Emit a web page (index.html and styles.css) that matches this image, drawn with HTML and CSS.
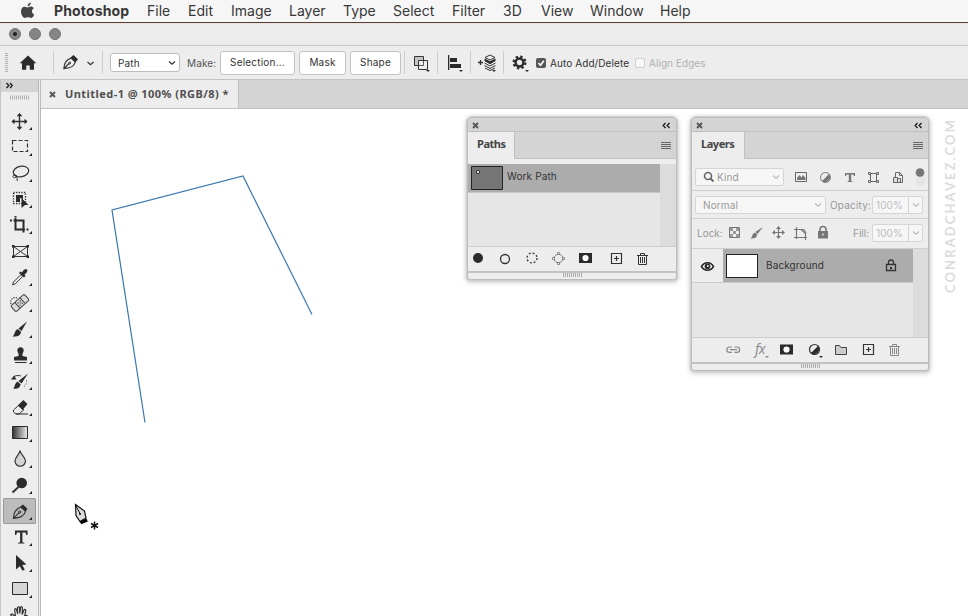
FILE: index.html
```html
<!DOCTYPE html>
<html lang="en">
<head>
<meta charset="utf-8">
<title>Photoshop</title>
<link rel="stylesheet" href="styles.css">
</head>
<body>
<nav class="menubar">
  <svg class="apple" width="54" height="22" viewBox="0 0 54 22"><path d="M27.600 6.300c0-1.900 1.300-3.400 3.100-3.700.2 1.900-1.300 3.700-3.100 3.700zM24.300 6.700c1.300 0 2 .7 3.100.7s1.900-.8 3.400-.8c1.200 0 2.300.6 3 1.600-2.700 1.600-2.200 5.100.4 6.200-.6 1.600-1.900 3.600-3.200 3.600-1.200 0-1.600-.7-3.100-.7s-2 .7-3.100.7c-1.600 0-3.800-3.500-3.800-6.500 0-3 1.700-4.800 3.300-4.800z"/></svg>
  <b>Photoshop</b><span>File</span><span>Edit</span><span>Image</span><span>Layer</span><span>Type</span><span>Select</span><span>Filter</span><span>3D</span><span>View</span><span>Window</span><span>Help</span>
</nav>
<header class="titlebar"><i class="light edited"></i><i class="light"></i><i class="light"></i></header>
<section class="options">
  <svg class="lead" width="110" height="33" viewBox="0 0 110 33">
    <path class="grip" d="M6.500 7v20" stroke-width="3" stroke-dasharray="1 1"/>
    <path class="ink" d="M28 9.500l8.300 7.700h-2.300v6.600h-4.300v-4.300h-3.400v4.300h-4.300v-6.600h-2.300z"/>
    <path class="sep" d="M53.500 5v23M102.500 5v23"/>
    <g transform="translate(63 9)"><path d="M.8 13.700C1 8.500 3 4.600 8.300 3.200l4 4C11 11.800 6.500 13.500.8 13.700zM1 13.500l5-5" class="line" stroke-width="1.200"/><circle cx="6.700" cy="8" r="1" class="line"/><path class="ink" d="M7.500 2.500L10.500 0l4.500 4.300-2.500 3z"/></g>
    <path class="line" stroke-width="1.200" d="M87.500 16l3 2.800 3-2.800"/>
  </svg>
  <div class="select path"><span>Path</span><svg width="8" height="6" viewBox="0 0 8 6"><path class="line" stroke-width="1.200" d="M1 1.500l3 2.800 3-2.800"/></svg></div>
  <span class="make">Make:</span>
  <button class="b1">Selection...</button><button class="b2">Mask</button><button class="b3">Shape</button>
  <svg class="ops" width="134" height="33" viewBox="401 0 134 33">
    <path class="sep" d="M404.500 5v23M437.500 5v23M470.500 5v23M503.500 5v23"/>
    <path d="M414.500 10.500h9v9h-9z" fill="#c6c6c6" stroke="#333"/><path d="M418.500 14.500h9v9h-9z" fill="#eee" stroke="#333"/><path class="line" d="M418.500 19.500h5v-5" stroke-width=".8"/>
    <path class="ink" d="M448 9h1.300v15H448zM450 12h7v4h-7zM450 18h11v4h-11zM426 24h4l-2 2zM459 24h4l-2 2zM492 24h4l-2 2zM525 24h4l-2 2z"/>
    <path class="line" stroke-width="1.300" d="M478 16.500h5M480.500 14v5"/>
    <path class="line" d="M490 9l5 2.500-5 2.500-5-2.500z"/><path class="ink" d="M484.500 12.500l5.500 2.700 5.500-2.700v2.500l-5.500 3.200-5.500-3.200z"/><path class="line" d="M484.500 17l5.500 3 5.500-3M484.500 19.500l5.500 3 5.500-3M485 22l5 2.500 5-2.500"/>
    <circle cx="519.500" cy="16.500" r="3.900" fill="none" stroke="#2b2b2b" stroke-width="2.500"/><circle cx="519.500" cy="16.500" r="5.900" fill="none" stroke="#2b2b2b" stroke-width="2.200" stroke-dasharray="2.400 2.234"/>
  </svg>
  <i class="check on"><svg width="10" height="10" viewBox="0 0 10 10"><path d="M2.500 5l2 2.200 3.300-4.500" fill="none" stroke="#fff" stroke-width="1.600"/></svg></i>
  <span class="auto">Auto Add/Delete</span><i class="check"></i><span class="align">Align Edges</span>
</section>
<main class="workspace">
  <aside class="tools">
    <div class="collapse"><svg width="38" height="12" viewBox="0 0 38 12"><path d="M6.500 3l2.300 2.500L6.500 8M10 3l2.300 2.500L10 8" fill="none" stroke="#222" stroke-width="1.400"/></svg></div>
    <svg class="toolgrip" width="38" height="16" viewBox="0 0 38 16"><path class="grip" d="M10 5.500h20" stroke-width="4" stroke-dasharray="1 1"/></svg>
    <div class="tool more"><svg viewBox="0 0 38 26"><path class="line" stroke-width="1.400" d="M12 13.500h15M19.500 6v15"/><path class="ink" d="M19.500 5l2.800 3.300h-5.600zM19.500 22l2.800-3.300h-5.600zM11.500 13.500l3-2.800v5.600zM27.500 13.500l-3-2.800v5.600z"/></svg></div>
    <div class="tool more"><svg viewBox="0 0 38 26"><path class="line" stroke-width="1.200" stroke-dasharray="4 2" d="M12.500 6.500h15v11h-15z"/></svg></div>
    <div class="tool more"><svg viewBox="0 0 38 26"><ellipse class="line" stroke-width="1.200" cx="21" cy="11.500" rx="7.800" ry="5.300" transform="rotate(-12 21 11.500)"/><path class="line" d="M14 15c-2 1-1 3.500 1.500 2.500s1-3-1.500-2.500c2 1 4 3 3 6"/></svg></div>
    <div class="tool more"><svg viewBox="0 0 38 26"><path class="line" stroke-width="1.300" stroke-dasharray="1.300 1.300" d="M13.500 6.500h12v11h-12z"/><path class="ink" d="M16 9h7v4l-3-1v4h-4zM21.500 12l7 7h-3.500l-3.500 3z"/></svg></div>
    <div class="tool more"><svg viewBox="0 0 38 26"><path d="M13.500 8.500h10v12M15.500 6v11.500h9.500" fill="none" stroke="#2b2b2b" stroke-width="2"/><path class="ink" d="M10 7.500h2v2h-2zM14.500 4h2v1.500h-2zM26.500 16.500h2v2h-2z"/></svg></div>
    <div class="tool"><svg viewBox="0 0 38 26"><path class="line" fill="#ddd" d="M13.500 8.500h14v10h-14zM13.500 8.500l14 10M27.500 8.500l-14 10"/><path class="ink" d="M12 7h2.500v2.500H12zM26.500 7H29v2.500h-2.500zM12 17.500h2.500V20H12zM26.500 17.500H29V20h-2.500z"/></svg></div>
    <div class="tool more"><svg viewBox="0 0 38 26"><path class="line" fill="#fff" d="M21 10.500l-7.500 7.500-1 2.800 2.800-1 7.500-7.500z"/><path class="ink" d="M19 9l1.500-1.500L22 8.500C23.500 5.500 26 4 27 5.500s0 3.500-2.500 5l1 1.500-1.500 1.500z"/></svg></div>
    <div class="tool more"><svg viewBox="0 0 38 26"><path class="line" stroke-width="1.200" stroke-dasharray="1.200 1.200" d="M11 14c-1.500-5 3-8 7-5.500"/><g transform="rotate(-42 20 13)"><rect x="11" y="9" width="18" height="8" rx="1.500" fill="#ddd" stroke="#444"/><path d="M16.500 9v7.500M23.500 9v7.500" stroke="#444"/><path d="M18 11h1.200v1.200H18zM21 11h1.200v1.200H21zM18 14h1.200v1.200H18zM21 14h1.200v1.200H21zM19.500 12.500h1.200v1.200h-1.200z" fill="#333"/></g></svg></div>
    <div class="tool more"><svg viewBox="0 0 38 26"><path class="ink" d="M27 5.500l-5.500 9.500-3-2.500zM17.800 13l3.200 2.700c-.5 4-3.500 5.300-8.500 4.800 2.500-1.500 1.500-5.500 5.300-7.500z"/></svg></div>
    <div class="tool more"><svg viewBox="0 0 38 26"><path class="ink" d="M17.500 9.500a3.200 3.200 0 1 1 6 0c-.5 1.500-1.500 2-1 4.500l4.500 1v3.500H14V15l4.500-1c.5-2.500-.5-3-1-4.500zM15 20h11.500v1H15z"/></svg></div>
    <div class="tool more"><svg viewBox="0 0 38 26"><path class="ink" d="M28 5.500l-6.500 10-3-2.500zM17.500 13.500l3.200 2.700c-1 3.800-3 5-7.500 4.300 2-1.500.8-4.500 4.300-7zM11 11.500l3-4 2.500 4z"/><path class="line" d="M14 8.500c3-1.500 5-1 7-.5"/><path class="line" stroke-dasharray="1 2" d="M26.500 12.500c.5 3-1 6-4.500 7"/></svg></div>
    <div class="tool more"><svg viewBox="0 0 38 26"><path class="line" fill="#fff" d="M19 11l-5.500 5v2l2.500 2h3l5-4.500z"/><path class="ink" d="M23.300 6l4.200 4-5 6-4.700-4.500zM16 19.500h12v1H16z"/></svg></div>
    <div class="tool more"><svg viewBox="0 0 38 26"><defs><linearGradient id="ramp"><stop stop-color="#333"/><stop offset="1" stop-color="#eee"/></linearGradient></defs><path fill="url(#ramp)" stroke="#2b2b2b" d="M12.500 6.500h15v12h-15z"/></svg></div>
    <div class="tool more"><svg viewBox="0 0 38 26"><path fill="#d3d3d3" stroke="#333" stroke-width="1.200" d="M20 4.500c.5 4 5.500 6.500 5.500 10.500a5.200 5.200 0 0 1-10.500 0c0-4 4.500-6.500 5-10.500z"/></svg></div>
    <div class="tool more"><svg viewBox="0 0 38 26"><circle class="ink" cx="21.700" cy="11" r="5.300"/><path class="line" stroke-width="2" d="M18.500 15L12.500 20.500"/></svg></div>
    <div class="tool more active"><svg viewBox="0 0 38 26"><g transform="translate(13 6)"><path d="M.5 14.300C.8 8 3 4.500 8 3.200l4.500 4C11.500 12 7 14 .5 14.300zL6 8.800" class="line" stroke-width="1.200"/><circle cx="6.700" cy="8" r="1.200" class="line"/><path class="ink" d="M7.500 2.300L10 .5l4.500 4.200-1.800 2.600z"/></g></svg></div>
    <div class="tool more"><svg viewBox="0 0 38 26"><path class="ink" d="M15 6.500h12.500v4.500h-1.200l-.8-2.500h-3.100v9.800l2 .5v.7h-6.300v-.7l2-.5V8.500H17L16.200 11H15z"/></svg></div>
    <div class="tool more"><svg viewBox="0 0 38 26"><path class="ink" d="M16 5l10.500 9.500-4.300.5 2.600 4.500-2.300 1.300-2.700-4.500L16 19.500z"/></svg></div>
    <div class="tool more"><svg viewBox="0 0 38 26"><path fill="#d6d6d6" stroke="#2b2b2b" d="M12.500 6.500h15v12h-15z"/></svg></div>
    <div class="tool"><svg viewBox="0 0 38 26"><path class="line" fill="#fff" stroke-width="1.200" d="M16 19c-2-2-3-4-5-5.500-1-1.500 1-2 2.500-.5l2 2-.8-7c0-1.800 1.500-1.800 2 0l1 4-.2-6c0-1.500 2-1.500 2 0l.3 5.500.7-6c.3-1.200 1.900-1 1.900.4l-.2 6.600 1.600-4.300c.7-1.300 2.200-.6 1.900.8l-1.200 5.500 1.500-1c1-.5 1.700.3 1.100 1.300L25 19z"/></svg></div>
  </aside>
  <section class="document">
    <div class="tabs"><div class="tab"><svg width="7" height="7" viewBox="0 0 7 7"><path d="M1 1l5 5M6 1L1 6" stroke="#555" stroke-width="1.900"/></svg><span>Untitled-1 @ 100% (RGB/8) *</span></div></div>
    <div class="canvas">
      <svg class="drawing" width="320" height="440" viewBox="41 109 320 440">
        <path d="M145 422.500L112 210l131-34 69 138.500" fill="none" stroke="#3a77ad" stroke-width="1.200"/>
        <path d="M75.500 504.500l9 6.500 1.500 7-6 3.500-4-6z" fill="#ddd" stroke="#111" stroke-width="1.200"/><path d="M75.500 505l4.500 8.500" stroke="#111"/><circle cx="80" cy="514" r="1"/><path d="M79.500 521.500l7-3 1.300 3-6.500 2.800z"/><path d="M94.500 521.500v8M91 523.500l7 4M98 523.500l-7 4" stroke="#111" stroke-width="1.500"/>
      </svg>
      <div class="watermark">CONRADCHAVEZ.COM</div>
      <article class="panel paths">
        <div class="bar"><svg width="7" height="7" viewBox="0 0 7 7"><path d="M1 1l5 5M6 1L1 6" stroke="#555" stroke-width="1.900"/></svg><svg width="9" height="7" viewBox="0 0 9 7"><path d="M3.500 1L1.200 3.500 3.500 6M7.500 1L5.200 3.500 7.500 6" fill="none" stroke="#222" stroke-width="1.400"/></svg></div>
        <div class="ptabs"><b>Paths</b><svg width="10" height="8" viewBox="0 0 10 8"><path d="M0 .5h10M0 2.500h10M0 4.500h10M0 6.500h10" stroke="#666"/></svg></div>
        <div class="list"><div class="rows"><div class="prow"><svg width="32" height="24" viewBox="0 0 32 24"><path fill="#757575" stroke="#222" d="M.5 .5h31v23H.5z"/><circle cx="7" cy="6" r="1.600" fill="#fff" stroke="#222"/></svg><span>Work Path</span></div></div></div>
        <div class="foot"><svg width="208" height="24" viewBox="468 247 208 24">
          <circle cx="478" cy="258" r="5" class="ink"/><circle cx="505" cy="259" r="4.500" class="line" stroke-width="1.300"/><circle cx="532" cy="258" r="5" class="line" stroke-width="1.300" stroke-dasharray="2 1.927"/>
          <circle cx="558.500" cy="258.500" r="4.300" fill="none" stroke="#777"/><path d="M557.500 252.500h2v2h-2zM557.500 262.500h2v2h-2zM552.500 257.500h2v2h-2zM562.500 257.500h2v2h-2z" fill="#eee" stroke="#777" stroke-width=".8"/>
          <path class="ink" d="M579 253h13v10h-13z"/><circle cx="585.500" cy="258" r="3.100" fill="#fff"/>
          <path class="line" stroke-width="1.200" d="M611.500 253.500h10v10h-10zM614 258.500h5M616.500 256v5"/>
          <path class="line" d="M637 255.500h11M640.500 255v-1.500h4v1.500M638.500 256v8.500h8V256M640.500 257v6M642.500 257v6M644.500 257v6"/>
        </svg></div>
        <div class="resize"><i></i></div>
      </article>
      <article class="panel layers">
        <div class="bar"><svg width="7" height="7" viewBox="0 0 7 7"><path d="M1 1l5 5M6 1L1 6" stroke="#555" stroke-width="1.900"/></svg><svg width="9" height="7" viewBox="0 0 9 7"><path d="M3.500 1L1.200 3.500 3.500 6M7.500 1L5.200 3.500 7.500 6" fill="none" stroke="#222" stroke-width="1.400"/></svg></div>
        <div class="ptabs"><b>Layers</b><svg width="10" height="8" viewBox="0 0 10 8"><path d="M0 .5h10M0 2.500h10M0 4.500h10M0 6.500h10" stroke="#666"/></svg></div>
        <div class="filter">
          <div class="field kind"><svg width="12" height="12" viewBox="0 0 12 12"><circle cx="5" cy="5" r="3.500" fill="none" stroke="#666" stroke-width="1.600"/><path d="M7.500 7.500l3 3" stroke="#666" stroke-width="2"/></svg><span>Kind</span><svg width="8" height="6" viewBox="0 0 8 6"><path class="soft" d="M1 1.500l3 2.800 3-2.800"/></svg></div>
          <svg width="144" height="30" viewBox="784 161 144 30">
            <path fill="#eee" stroke="#666" d="M795.500 172.500h11v9h-11z"/><path class="mid" d="M797 180v-2l2.500-3 2 2.500 1.500-2.500 2.500 3v2z"/>
            <circle cx="825.500" cy="177.500" r="5" fill="none" stroke="#777"/><path class="mid" d="M829 174a5 5 0 0 1-7 7z"/>
            <path class="mid" d="M845 173h10v3h-1l-.7-1.500h-2.100v6.500l1.300.4v.6h-5v-.6l1.300-.4v-6.500h-2.100L846 176h-1z"/>
            <path fill="none" stroke="#666" d="M870.500 173.500h6v8h-6zM868.500 172.500h2v2h-2zM876.500 172.500h2v2h-2zM868.500 180.500h2v2h-2zM876.500 180.500h2v2h-2z"/>
            <path fill="#eee" stroke="#666" d="M895.500 172.500h4l3 3v7h-7z"/><path fill="none" stroke="#666" d="M899.500 172.500v3h3"/><path fill="#ddd" stroke="#666" d="M893.500 177.500h4v5h-4zM897.500 178.500h3v4h-3z"/>
            <rect x="916" y="169" width="9" height="17" rx="4.500" fill="#e5e5e5"/><circle cx="920" cy="172.500" r="4.300" fill="#777"/>
          </svg>
        </div>
        <div class="blend"><div class="field mode"><span>Normal</span><svg width="8" height="6" viewBox="0 0 8 6"><path class="soft" d="M1 1.500l3 2.800 3-2.800"/></svg></div><label>Opacity:</label><div class="field num"><span>100%</span><i><svg width="8" height="6" viewBox="0 0 8 6"><path class="soft" d="M1 1.500l3 2.800 3-2.800"/></svg></i></div></div>
        <div class="locks"><label>Lock:</label>
          <svg width="110" height="28" viewBox="725 219 110 28">
            <path fill="#eee" stroke="#777" d="M729.500 227.500h10v10h-10z"/><path fill="#999" d="M730 228h3v3h-3zM736 228h3v3h-3zM733 231h3v3h-3zM730 234h3v3h-3zM736 234h3v3h-3z"/>
            <path class="mid" d="M763 227l-5.500 7-2.200-2zM754.800 232.500l2.400 2c-.5 3.500-3 4.300-6.700 4 2-1.200 1.300-4.500 4.300-6z"/>
            <path stroke="#777" stroke-width="1.200" d="M773 232.500h11M778.500 227v11"/><path class="mid" d="M778.500 226l2.500 3h-5zM778.500 239l2.500-3h-5zM772 232.500l3-2.500v5zM785 232.500l-3-2.500v5z"/>
            <path fill="none" stroke="#777" stroke-width="1.200" d="M794 229.500h10M796.500 227v12M794 237.500h13M805.500 233v7M804 229.500l2 4M801 229.500l4.500 4"/>
            <path class="mid" d="M818 231h10v7.500h-10z"/><path fill="none" stroke="#777" stroke-width="1.600" d="M820 232v-2.500a3 3 0 0 1 6 0v2.500"/><circle cx="823" cy="234.500" r="1" fill="#ddd"/>
          </svg>
          <label class="fill">Fill:</label><div class="field num"><span>100%</span><i><svg width="8" height="6" viewBox="0 0 8 6"><path class="soft" d="M1 1.500l3 2.800 3-2.800"/></svg></i></div></div>
        <div class="list"><div class="rows"><div class="lrow">
          <svg class="eye" width="31" height="33" viewBox="0 0 31 33"><path d="M9.500 17.500c3-5 9-5 12 0-3 5-9 5-12 0z" fill="#fff" stroke="#222" stroke-width="1.500"/><circle cx="15.500" cy="17.300" r="2.900" class="ink"/><circle cx="15.800" cy="17" r=".9" fill="#fff"/></svg>
          <div class="name"><i class="thumb"></i><span>Background</span><svg width="12" height="13" viewBox="0 0 12 13"><path class="line" stroke-width="1.300" d="M1.500 5.500h9v6h-9zM3.500 5V3.500a2.500 2.500 0 0 1 5 0V5"/><path class="ink" d="M5 8h2v2H5z"/></svg></div>
        </div></div></div>
        <div class="foot"><svg width="236" height="24" viewBox="692 338 236 24">
          <path fill="none" stroke="#888" stroke-width="1.200" d="M732 347h-2.500a2.700 2.700 0 0 0 0 5.400h2.500M734.500 347h2.500a2.700 2.700 0 0 1 0 5.400h-2.500M730 349.700h7"/>
          <text x="755" y="354" class="fx">fx</text><path fill="#888" d="M765 356h4l-2 2z"/>
          <path class="ink" d="M780 344.500h13v10h-13z"/><circle cx="786.500" cy="349.500" r="3.100" fill="#fff"/>
          <circle cx="814.500" cy="349.500" r="5" class="line" stroke-width="1.200"/><path class="ink" d="M818 346a5 5 0 0 1-7 7zM819 356h4l-2 2z"/>
          <path fill="#ccc" stroke="#444" d="M835.500 345.500h4l1.500 2h5.500v7h-11z"/>
          <path class="line" stroke-width="1.200" d="M863.500 344.500h10v10h-10zM866 349.500h5M868.500 347v5"/>
          <path fill="none" stroke="#888" d="M889 346.500h11M892.500 346v-1.500h4v1.500M890.500 347v8.500h8V347M892.500 348v6M894.500 348v6M896.500 348v6"/>
        </svg></div>
        <div class="resize"><i></i></div>
      </article>
    </div>
  </section>
</main>
</body>
</html>
```
FILE: styles.css
```css
* { box-sizing: border-box; }
body { margin: 0; width: 968px; height: 616px; overflow: hidden; display: flex; flex-direction: column; background: #fff; font: 10px/14px Inter, "Liberation Sans", sans-serif; letter-spacing: .12px; color: #333; }
svg { display: block; flex: none; }
i { font-style: normal; }
.ink { fill: #2b2b2b; }
.line { fill: none; stroke: #333; }
.soft { fill: none; stroke: #999; }
.mid { fill: #777; }
.grip { fill: none; stroke: #b0b0b0; }
.sep { stroke: #cecece; }

.menubar { height: 23px; flex: none; display: grid; grid-template-columns: 54px 93px 41px 43px 58px 54px 50px 59px 51px 38px 49px 70px auto; background: #f6f6f6; border-bottom: 1px solid #51413e; font-size: 14px; line-height: 22px; letter-spacing: 0; color: #373737; }
.menubar b { font-weight: 700; letter-spacing: .15px; }
.apple { fill: #444; }
.titlebar { height: 23px; flex: none; display: flex; align-items: flex-start; gap: 8px; padding: 4px 0 0 9px; background: #ececec; border-top: 1px solid #f0dfd8; border-bottom: 1px solid #c6c6c6; }
.light { width: 12px; height: 12px; border-radius: 50%; background: #858585; border: 1px solid #737373; }
.edited { background: radial-gradient(circle, #222 1.500px, #858585 2.300px); }

.options { height: 34px; flex: none; display: flex; align-items: center; background: #ededed; border-bottom: 1px solid #c4c4c4; }
.lead { flex: none; }
.select { width: 70px; height: 19px; padding: 0 3px 0 7px; display: flex; align-items: center; justify-content: space-between; background: #fff; border: 1px solid #bdbdbd; border-radius: 3px; }
.make { width: 40px; padding-left: 7px; white-space: nowrap; color: #555; }
.options button { height: 24px; padding: 0 0 1px; border: 1px solid #c3c3c3; border-radius: 3px; background: #fff; font: inherit; letter-spacing: .2px; color: #333; }
.b1 { width: 75px; }
.b2, .b3 { margin-left: 4px; }
.b2 { width: 47px; }
.b3 { width: 51px; }
.check { flex: none; width: 10px; height: 10px; border: 1px solid #d0d0d0; border-radius: 2px; background: #f7f7f7; }
.check.on { background: #585858; border: 0; margin-left: 1px; }
.auto { width: 89px; padding-left: 4px; white-space: nowrap; letter-spacing: .08px; }
.align { margin-left: 4px; color: #b0b0b0; letter-spacing: .05px; }

.workspace { flex: 1; min-height: 0; display: flex; }
.tools { width: 41px; flex: none; overflow: hidden; background: #ededed; border-left: 1px solid #c4c4c4; border-right: 3px double #b9b9b9; display: flex; flex-direction: column; }
.tools svg { margin-left: -1px; }
.collapse { height: 12px; flex: none; background: #d4d4d4; }
.tool { height: 26px; flex: none; position: relative; width: 33px; margin-left: 2px; }
.tool svg { width: 38px; height: 26px; margin-left: -3px; }
.more::after { content: ""; position: absolute; right: 4px; bottom: 4px; border-left: 3px solid transparent; border-bottom: 3px solid #222; }
.active { background: #bcbcbc; box-shadow: inset 0 0 0 1px #999; border-radius: 2px; }
.document { flex: 1; min-width: 0; display: flex; flex-direction: column; }
.tabs { height: 29px; flex: none; background: #d4d4d4; border-bottom: 1px solid #c2c2c2; display: flex; }
.tab { width: 198px; padding-left: 8px; display: flex; align-items: center; gap: 9px; background: #ededed; border-right: 1px solid #c2c2c2; font: 700 11px/14px "Noto Sans", sans-serif; letter-spacing: .45px; color: #505050; white-space: nowrap; }
.canvas { flex: 1; min-height: 0; position: relative; background: #fff; overflow: hidden; }
.drawing { position: absolute; left: 0; top: 0; }
.watermark { position: absolute; left: 900px; top: 9px; height: 175px; writing-mode: vertical-rl; transform: rotate(180deg); font: 700 13px/18px Lato, sans-serif; letter-spacing: 2.100px; color: #dcdcdc; }

.panel { position: absolute; top: 8px; border: 1px solid #bcbcbc; border-radius: 5px 5px 3px 3px; background: #ededed; overflow: hidden; box-shadow: 0 0 0 1px #cfcfcf, 0 1px 5px 1px rgba(0,0,0,.25); display: flex; flex-direction: column; }
.paths { left: 426px; width: 210px; height: 163px; }
.layers { left: 650px; width: 238px; height: 254px; }
.bar { height: 14px; flex: none; display: flex; align-items: center; justify-content: space-between; padding: 1px 5px 0 4px; background: #d4d4d4; border-bottom: 1px solid #bebebe; }
.ptabs { height: 27px; flex: none; display: flex; align-items: center; justify-content: space-between; padding-right: 5px; background: linear-gradient(#c0c0c0, #c0c0c0) bottom / 100% 1px no-repeat #d4d4d4; }
.ptabs b { height: 27px; padding-left: 9px; background: #ededed; border-right: 1px solid #c0c0c0; font: 700 11px/23px "Noto Sans", sans-serif; letter-spacing: -.45px; color: #444; }
.paths b { width: 47px; }
.layers b { width: 53px; }
.list { flex: 1; min-height: 0; display: flex; background: #dcdcdc; border-bottom: 1px solid #cdcdcd; }
.paths .list { margin-top: 5px; }
.rows { background: #e6e6e6; }
.paths .rows { width: 192px; }
.layers .rows { width: 221px; }
.prow { height: 29px; display: flex; align-items: center; gap: 4px; padding-left: 3px; background: #acacac; border-bottom: 1px solid #c6c6c6; }
.prow span { margin-top: -5px; }
.foot { height: 24px; flex: none; }
.resize { height: 8px; flex: none; border-top: 2px solid #c2c2c2; display: flex; justify-content: center; align-items: flex-start; }
.resize i { width: 19px; height: 4px; background: repeating-linear-gradient(90deg, #aaa 0 1px, transparent 1px 2px); }
.filter, .blend, .locks { flex: none; display: flex; align-items: center; border-bottom: 1px solid #cfcfcf; padding-left: 3px; color: #999; }
.filter { height: 32px; padding-top: 3px; }
.blend { height: 28px; }
.locks { height: 30px; padding-bottom: 2px; }
.field { flex: none; height: 18px; display: flex; align-items: center; justify-content: space-between; background: #f6f6f6; border: 1px solid #d5d5d5; border-radius: 2px; }
.kind { width: 89px; padding: 0 3px 0 7px; margin-top: 2px; }
.kind span { flex: 1; margin-left: 2px; }
.mode { width: 131px; padding: 0 3px 0 7px; }
.blend label { width: 46px; padding-left: 4px; white-space: nowrap; letter-spacing: .2px; }
.num { width: 51px; padding-left: 3px; color: #bdbdbd; }
.num i { width: 14px; height: 100%; border-left: 1px solid #d5d5d5; display: flex; align-items: center; justify-content: center; }
.locks label { width: 30px; padding-left: 2px; letter-spacing: 0; }
.locks .fill { width: 37px; padding-left: 18px; white-space: nowrap; }
.lrow { height: 34px; display: flex; border-bottom: 1px solid #ccc; background: #ededed; }
.name { flex: 1; display: flex; align-items: center; padding: 0 16px 0 3px; background: #acacac; }
.thumb { width: 32px; height: 24px; background: #fff; border: 1px solid #222; margin-right: 8px; }
.name span { flex: 1; margin-top: -1px; }
.fx { font: italic 14px "Open Sans", sans-serif; letter-spacing: -.5px; fill: #888; }
```
